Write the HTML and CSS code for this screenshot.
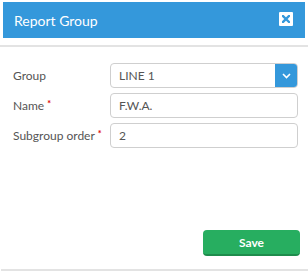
FILE: index.html
```html
<!DOCTYPE html>
<html lang="en">
<head>
    <meta charset="UTF-8">
    <title>Report Group</title>
    <link rel="stylesheet" href="styles.css">
</head>
<body>
    <div class="modal">
        <div class="modal-header">
            <span class="modal-title">Report Group</span>
            <button class="close-btn" type="button">
                <svg width="8" height="8" viewBox="0 0 8 8">
                    <path d="M1 1 L7 7 M7 1 L1 7" stroke="#3498db" stroke-width="2.4" stroke-linecap="square"/>
                </svg>
            </button>
        </div>

        <form class="modal-body">
            <div class="field">
                <label class="label">Group</label>
                <div class="select">
                    <span class="select-value">LINE 1</span>
                    <span class="select-arrow">
                        <svg width="9" height="6" viewBox="0 0 9 6">
                            <path d="M1 1 L4.5 4.5 L8 1" fill="none" stroke="#ffffff" stroke-width="1.6"/>
                        </svg>
                    </span>
                </div>
            </div>
            <div class="field">
                <label class="label">Name <span class="req">*</span></label>
                <input class="input" type="text" value="F.W.A.">
            </div>
            <div class="field">
                <label class="label">Subgroup order <span class="req">*</span></label>
                <input class="input" type="text" value="2">
            </div>
        </form>

        <div class="modal-footer">
            <button class="button" type="button">Save</button>
        </div>
    </div>
</body>
</html>
```

FILE: styles.css
```css
* {
    margin: 0;
    padding: 0;
    box-sizing: border-box;
}
body {
    font-family: Lato, "Open Sans", Arial, sans-serif;
    background-color: #ffffff;
    font-size: 12px;
    color: #555555;
}

.modal {
    width: 308px;
    height: 280px;
    display: flex;
    flex-direction: column;
}

.modal-header {
    margin: 2px 3px 0 3px;
    height: 36px;
    background-color: #3498db;
    display: flex;
    align-items: center;
    justify-content: space-between;
    padding: 0 12px 0 11px;
}
.modal-title {
    color: #ffffff;
    font-size: 14px;
}
.close-btn {
    width: 14px;
    height: 14px;
    background: #ffffff;
    border: none;
    border-radius: 1px;
    display: flex;
    align-items: center;
    justify-content: center;
    margin-top: -2px;
}

.modal-body {
    margin-top: 7px;
    border-top: 2px solid #e3e3e3;
    padding: 16px 10px 0 13px;
    flex: 1;
    display: flex;
    flex-direction: column;
    gap: 5px;
}

.field {
    display: flex;
    align-items: center;
    height: 25px;
}
.label {
    width: 97px;
    font-size: 12px;
    white-space: nowrap;
}
.req {
    color: #e00000;
    font-weight: bold;
    font-size: 9px;
    vertical-align: 3px;
}

.input,
.select {
    flex: 1;
    height: 25px;
    border: 1px solid #cfcfcf;
    border-radius: 4px;
    font-family: Lato, "Open Sans", Arial, sans-serif;
    font-size: 12px;
    color: #555555;
    padding: 0 8px;
    background: #ffffff;
}
.select {
    display: flex;
    align-items: center;
    justify-content: space-between;
    padding-right: 0;
    overflow: hidden;
}
.select-arrow {
    width: 23px;
    height: 25px;
    margin-right: -1px;
    background-color: #3498db;
    display: flex;
    align-items: center;
    justify-content: center;
}

.modal-footer {
    border-bottom: 2px solid #e3e3e3;
    margin: 0 0 9px 1px;
    padding: 0 8px 13px 0;
    display: flex;
    justify-content: flex-end;
}
.button {
    width: 97px;
    height: 26px;
    background-color: #27ae60;
    color: #ffffff;
    border: none;
    border-bottom: 2px solid #1e8c4c;
    border-radius: 4px;
    font-family: Lato, "Open Sans", Arial, sans-serif;
    font-weight: bold;
    font-size: 12px;
}
```
